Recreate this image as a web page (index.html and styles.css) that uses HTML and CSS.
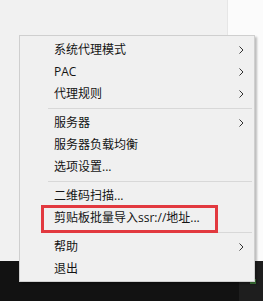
FILE: index.html
```html
<!DOCTYPE html>
<html lang="zh-CN">
<head>
    <meta charset="UTF-8">
    <meta name="viewport" content="width=device-width, initial-scale=1.0">
    <title>托盘菜单</title>
    <link rel="stylesheet" href="styles.css">
</head>
<body>
    <div class="desktop">
        <div class="screen">
            <div class="window-left"></div>
            <div class="window-right"></div>
        </div>
        <div class="taskbar">
            <div class="tray">
                <span class="tray-icon"></span>
            </div>
        </div>
    </div>

    <!-- 右键菜单 -->
    <div class="menu">
        <div class="item has-sub"><span>系统代理模式</span><svg class="arrow" width="5" height="8" viewBox="0 0 5 8"><path d="M0.5 0.5 L4 4 L0.5 7.5" fill="none" stroke="#333" stroke-width="1"/></svg></div>
        <div class="item has-sub"><span>PAC</span><svg class="arrow" width="5" height="8" viewBox="0 0 5 8"><path d="M0.5 0.5 L4 4 L0.5 7.5" fill="none" stroke="#333" stroke-width="1"/></svg></div>
        <div class="item has-sub"><span>代理规则</span><svg class="arrow" width="5" height="8" viewBox="0 0 5 8"><path d="M0.5 0.5 L4 4 L0.5 7.5" fill="none" stroke="#333" stroke-width="1"/></svg></div>
        <div class="sep"></div>
        <div class="item has-sub"><span>服务器</span><svg class="arrow" width="5" height="8" viewBox="0 0 5 8"><path d="M0.5 0.5 L4 4 L0.5 7.5" fill="none" stroke="#333" stroke-width="1"/></svg></div>
        <div class="item"><span>服务器负载均衡</span></div>
        <div class="item"><span>选项设置...</span></div>
        <div class="sep"></div>
        <div class="item"><span>二维码扫描...</span></div>
        <div class="item marked"><span>剪贴板批量导入ssr://地址...</span></div>
        <div class="sep"></div>
        <div class="item has-sub"><span>帮助</span><svg class="arrow" width="5" height="8" viewBox="0 0 5 8"><path d="M0.5 0.5 L4 4 L0.5 7.5" fill="none" stroke="#333" stroke-width="1"/></svg></div>
        <div class="item"><span>退出</span></div>
    </div>
</body>
</html>
```

FILE: styles.css
```css
body {
    margin: 0;
    width: 263px;
    height: 301px;
    overflow: hidden;
    font-family: "Open Sans", "Noto Sans CJK SC", sans-serif;
    font-size: 12px;
}
.desktop {
    display: flex;
    flex-direction: column;
    height: 301px;
}
.screen {
    display: flex;
    height: 261px;
}
.window-left {
    width: 227px;
    background-color: #f1f1f1;
}
.window-right {
    flex: 1;
    background-color: #fbfbfb;
    border-left: 1px solid #e6e6e6;
}
.taskbar {
    flex: 1;
    display: flex;
    justify-content: flex-end;
    background-color: #121212;
}
.tray {
    width: 24px;
    display: flex;
    align-items: center;
    justify-content: center;
    background-color: #1e1e1e;
}
.tray-icon {
    width: 6px;
    height: 5px;
    margin-left: 4px;
    background-color: #3f7a3a;
}
.menu {
    position: absolute;
    left: 19px;
    top: 35px;
    width: 234px;
    padding: 3px 0 1px 0;
    background-color: #f0f0f0;
    border: 1px solid #cfcfcf;
    box-shadow: 2px 2px 2px rgba(0, 0, 0, 0.25);
}
.item {
    position: relative;
    display: flex;
    align-items: center;
    justify-content: space-between;
    height: 22px;
    padding: 0 10px 0 34px;
    color: #141414;
}
.item span {
    line-height: 22px;
}
.arrow {
    display: block;
}
.sep {
    height: 7px;
    margin-left: 28px;
    margin-right: 2px;
    display: flex;
    align-items: center;
}
.sep::after {
    content: "";
    flex: 1;
    height: 1px;
    background-color: #d8d8d8;
}
.item.marked::after {
    content: "";
    position: absolute;
    left: 21px;
    top: -2px;
    width: 171px;
    height: 22px;
    border: 3px solid #e2393f;
}
```
